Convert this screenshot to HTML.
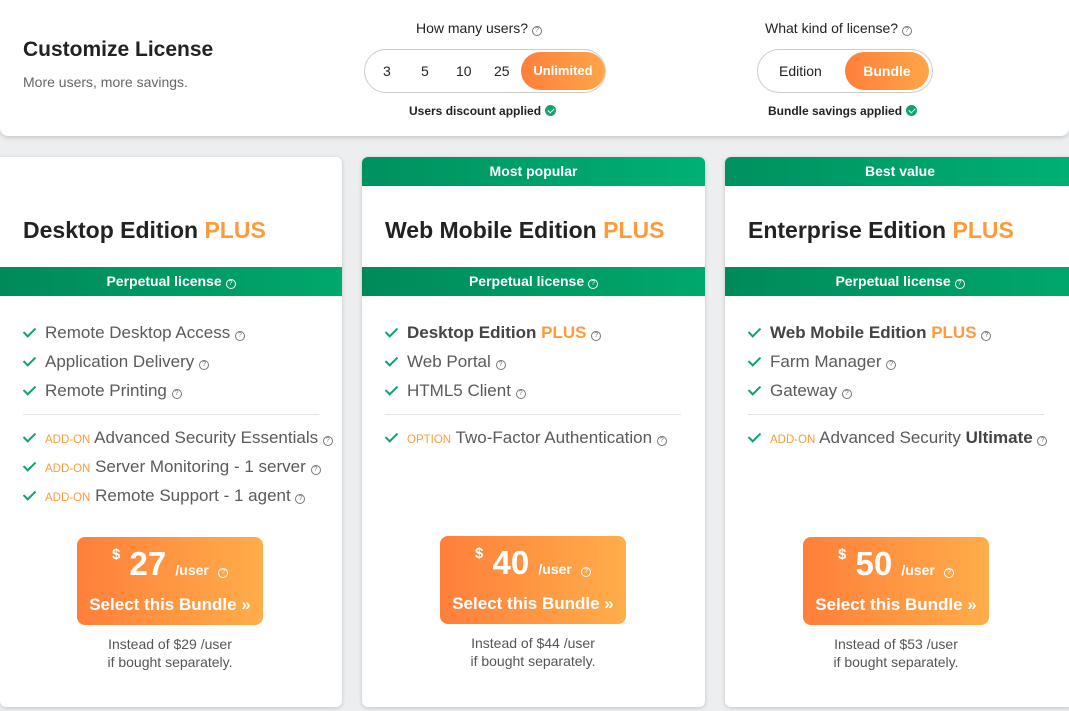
<!DOCTYPE html>
<html><head><meta charset="utf-8"><style>
*{box-sizing:border-box;margin:0;padding:0}
body{width:1069px;height:711px;background:#eceef0;font-family:"Liberation Sans",Arial,sans-serif;position:relative;overflow:hidden;color:#222}
.top{position:absolute;left:0;top:0;width:1069px;height:136px;background:#fff;border-radius:0 0 8px 8px;box-shadow:0 2px 4px rgba(0,0,0,.15)}
.q{display:inline-block;width:10px;height:10px;border:1px solid #777;border-radius:50%;font-size:7px;line-height:8px;text-align:center;color:#777;vertical-align:1px;font-weight:normal}
.abs{position:absolute}
.pill{position:absolute;height:44px;border:1px solid #ccc;border-radius:22px;background:#fff}
.pill span{position:absolute;top:13px;font-size:14px;color:#222}
.pill span.on{top:2px;height:38px;border-radius:19px;background:linear-gradient(90deg,#ff7f3a,#ffa548);color:#fff;font-weight:bold;text-align:center;line-height:38px}
.ok{display:inline-block;width:11px;height:11px;border-radius:50%;background:#10a36b;vertical-align:-1px;position:relative;margin-left:4px}
.ok:after{content:"";position:absolute;left:3.5px;top:1.5px;width:3px;height:5px;border:solid #fff;border-width:0 1.5px 1.5px 0;transform:rotate(45deg)}
.card{position:absolute;top:157px;height:550px;background:#fff;border-radius:6px;box-shadow:0 1px 4px rgba(0,0,0,.18);overflow:hidden}
.hb{position:absolute;left:0;top:0;width:100%;height:29px;background:linear-gradient(90deg,#00915f,#00b074);color:#fff;font-weight:bold;font-size:14px;text-align:center;line-height:29px}
.ttl{position:absolute;left:23px;top:60px;font-size:23px;font-weight:bold;color:#222}
.ttl b{color:#ff9a3c}
.band{position:absolute;left:0;top:110px;width:100%;height:29px;background:linear-gradient(90deg,#008a5a,#00a86c);color:#fff;font-weight:bold;font-size:14px;text-align:center;line-height:29px}
.band .q{border-color:#fff;color:#fff}
.f{position:absolute;left:23px;font-size:17px;color:#5a5a5a;white-space:nowrap;line-height:20px}
.f:before{content:"";display:inline-block;width:5px;height:10px;border:solid #10a36b;border-width:0 2px 2px 0;transform:rotate(45deg);margin:0 12px 0 3px;vertical-align:1px}
.f i{font-style:normal;font-size:11.5px;color:#ff9a3c}
.f b{color:#444}
.f b.o{color:#ff9a3c}
.sep{position:absolute;left:23px;width:296px;top:257px;border-top:1px solid #e3e3e3}
.btn{position:absolute;top:380px;width:186px;height:88px;border-radius:8px;background:linear-gradient(90deg,#ff7f3a,#ffad4a);color:#fff;text-align:center;font-weight:bold}
.btn .p{position:absolute;top:8px;left:0;width:100%;font-size:33px}
.btn .p sup{font-size:15px;vertical-align:16px}
.btn .p small{font-size:14px}
.btn .p .q{border-color:#fff;color:#fff}
.btn .s{position:absolute;top:58px;width:100%;font-size:17px}
.ins{position:absolute;top:478px;width:186px;text-align:center;font-size:14px;color:#555;line-height:18px}
</style></head><body>
<div class="top">
 <div class="abs" style="left:23px;top:38px;font-size:21px;font-weight:bold">Customize License</div>
 <div class="abs" style="left:23px;top:74px;font-size:14px;color:#666">More users, more savings.</div>
 <div class="abs" style="left:416px;top:20px;font-size:14px">How many users? <span class="q">?</span></div>
 <div class="pill" style="left:364px;top:49px;width:242px">
  <span style="left:18px">3</span><span style="left:56px">5</span><span style="left:91px">10</span><span style="left:129px">25</span>
  <span class="on" style="left:156px;width:84px;font-size:13px">Unlimited</span>
 </div>
 <div class="abs" style="left:409px;top:104px;font-size:12px;font-weight:bold">Users discount applied<span class="ok"></span></div>
 <div class="abs" style="left:765px;top:20px;font-size:14px">What kind of license? <span class="q">?</span></div>
 <div class="pill" style="left:757px;top:49px;width:176px">
  <span style="left:21px">Edition</span>
  <span class="on" style="left:87px;width:84px;font-size:14px">Bundle</span>
 </div>
 <div class="abs" style="left:768px;top:104px;font-size:12px;font-weight:bold">Bundle savings applied<span class="ok"></span></div>
</div>

<div class="card" style="left:0;width:342px;border-top-left-radius:0">
 <div class="ttl">Desktop Edition <b>PLUS</b></div>
 <div class="band">Perpetual license <span class="q">?</span></div>
 <div class="f" style="top:166px">Remote Desktop Access <span class="q">?</span></div>
 <div class="f" style="top:195px">Application Delivery <span class="q">?</span></div>
 <div class="f" style="top:224px">Remote Printing <span class="q">?</span></div>
 <div class="sep"></div>
 <div class="f" style="top:271px"><i>ADD-ON</i> Advanced Security Essentials <span class="q">?</span></div>
 <div class="f" style="top:300px"><i>ADD-ON</i> Server Monitoring - 1 server <span class="q">?</span></div>
 <div class="f" style="top:329px"><i>ADD-ON</i> Remote Support - 1 agent <span class="q">?</span></div>
 <div class="btn" style="left:77px"><div class="p"><sup>$</sup> 27 <small>/user</small> <span class="q">?</span></div><div class="s">Select this Bundle »</div></div>
 <div class="ins" style="left:77px">Instead of $29 /user<br>if bought separately.</div>
</div>

<div class="card" style="left:362px;width:343px">
 <div class="hb">Most popular</div>
 <div class="ttl">Web Mobile Edition <b>PLUS</b></div>
 <div class="band">Perpetual license <span class="q">?</span></div>
 <div class="f" style="top:166px"><b>Desktop Edition</b> <b class="o">PLUS</b> <span class="q">?</span></div>
 <div class="f" style="top:195px">Web Portal <span class="q">?</span></div>
 <div class="f" style="top:224px">HTML5 Client <span class="q">?</span></div>
 <div class="sep"></div>
 <div class="f" style="top:271px"><i>OPTION</i> Two-Factor Authentication <span class="q">?</span></div>
 <div class="btn" style="left:78px;top:379px"><div class="p"><sup>$</sup> 40 <small>/user</small> <span class="q">?</span></div><div class="s">Select this Bundle »</div></div>
 <div class="ins" style="left:78px;top:477px">Instead of $44 /user<br>if bought separately.</div>
</div>

<div class="card" style="left:725px;width:350px">
 <div class="hb">Best value</div>
 <div class="ttl">Enterprise Edition <b>PLUS</b></div>
 <div class="band">Perpetual license <span class="q">?</span></div>
 <div class="f" style="top:166px"><b>Web Mobile Edition</b> <b class="o">PLUS</b> <span class="q">?</span></div>
 <div class="f" style="top:195px">Farm Manager <span class="q">?</span></div>
 <div class="f" style="top:224px">Gateway <span class="q">?</span></div>
 <div class="sep"></div>
 <div class="f" style="top:271px"><i>ADD-ON</i> Advanced Security <b>Ultimate</b> <span class="q">?</span></div>
 <div class="btn" style="left:78px"><div class="p"><sup>$</sup> 50 <small>/user</small> <span class="q">?</span></div><div class="s">Select this Bundle »</div></div>
 <div class="ins" style="left:78px">Instead of $53 /user<br>if bought separately.</div>
</div>
</body></html>
